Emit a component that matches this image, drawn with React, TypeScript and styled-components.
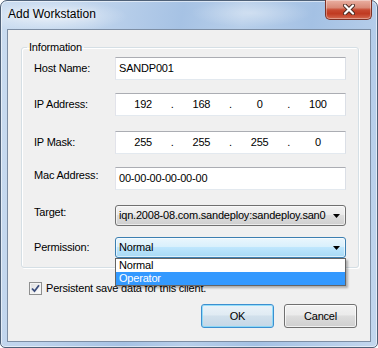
import React from 'react';
import styled, { createGlobalStyle } from 'styled-components';

const Global = createGlobalStyle`
  html, body { margin: 0; padding: 0; background: #ffffff; }
  body {
    width: 378px; height: 348px; overflow: hidden;
    font-family: "Liberation Sans", Arial, sans-serif;
  }
  * { box-sizing: border-box; }
`;

const Window = styled.div`
  width: 378px;
  height: 348px;
  border: 1px solid #4f6178;
  border-radius: 7px 7px 5px 5px;
  padding: 0 6px 5px 6px;
  display: flex;
  flex-direction: column;
  background:
    radial-gradient(ellipse 75px 16px at 52px 15px, rgba(255,255,255,0.6), rgba(255,255,255,0) 100%),
    radial-gradient(ellipse 60px 14px at 250px 12px, rgba(255,255,255,0.35), rgba(255,255,255,0) 100%),
    linear-gradient(100deg, #cadcf0 0%, #bed3ec 22%, #a6c2e4 42%, #b8cfea 56%, #a4c1e4 72%, #c3d7ee 100%);
  box-shadow: inset 0 0 0 1px rgba(255,255,255,0.55);
`;

const TitleBar = styled.div`
  height: 28px;
  flex: none;
  display: flex;
  align-items: flex-start;
`;

const Title = styled.div`
  padding: 6px 0 0 1px;
  font-size: 12px;
  line-height: 15px;
  color: #000;
  text-shadow: 0 0 6px rgba(255,255,255,0.9);
`;

const CloseButton = styled.div`
  margin: -1px -1px 0 auto;
  width: 47px;
  height: 20px;
  border: 1px solid #7e3226;
  border-top: none;
  border-radius: 0 0 5px 5px;
  background: linear-gradient(#eab0a2 0%, #d98a77 40%, #c84a31 52%, #c03a21 72%, #d4694f 100%);
  box-shadow: inset 0 0 0 1px rgba(255,255,255,0.35);
  display: flex;
  align-items: center;
  justify-content: center;
`;

const Client = styled.div`
  flex: 1;
  border: 1px solid #7d8ea4;
  background: #f0f0f0;
  padding: 0 11px 0 13px;
  display: flex;
  flex-direction: column;
  font-size: 11px;
  letter-spacing: -0.2px;
  color: #000;
`;

const GroupBox = styled.fieldset`
  margin: 11px 0 0 0;
  padding: 3px 12px 9px 12px;
  border: 1px solid #d5dfe5;
  border-radius: 3px;
  box-shadow: 1px 1px 0 #ffffff, inset 1px 1px 0 #ffffff;
  min-width: 0;
`;

const Legend = styled.legend`
  padding: 0 2px;
  margin-left: -7px;
  font-size: 11px;
  line-height: 13px;
`;

const Row = styled.div<{ $gap: number }>`
  display: flex;
  align-items: center;
  margin-top: ${p => p.$gap}px;
`;

const Label = styled.div<{ $lift?: boolean }>`
  width: 81px;
  flex: none;
  line-height: 13px;
  margin-bottom: ${p => (p.$lift ? 6 : 0)}px;
`;

const TextBox = styled.div`
  flex: 1;
  height: 23px;
  background: #fff;
  border: 1px solid;
  border-color: #abadb3 #dbdfe6 #e3e9ef #e2e3ea;
  padding: 0 3px;
  display: flex;
  align-items: center;
  line-height: 13px;
`;

const IpBox = styled(TextBox)`
  padding: 0;
  display: grid;
  grid-template-columns: 1fr 4px 1fr 4px 1fr 4px 1fr;
`;

const Octet = styled.span`
  text-align: center;
`;

const Dot = styled.span`
  text-align: center;
`;

const ComboWrap = styled.div`
  flex: 1;
  position: relative;
`;

const Combo = styled.div<{ $focused?: boolean }>`
  height: 21px;
  border: 1px solid ${p => (p.$focused ? '#3c7fb1' : '#707070')};
  border-radius: 3px;
  background: ${p =>
    p.$focused
      ? 'linear-gradient(#eaf6fd 0%, #d9f0fc 45%, #bee6fd 50%, #a7d9f5 100%)'
      : 'linear-gradient(#f2f2f2 0%, #ebebeb 45%, #dddddd 50%, #cfcfcf 100%)'};
  box-shadow: inset 0 0 0 1px rgba(255,255,255,0.6);
  display: flex;
  align-items: center;
  padding: 0 5px 0 3px;
  line-height: 13px;
  white-space: nowrap;
`;

const ComboText = styled.span`
  flex: 1;
  overflow: hidden;
`;

const DropList = styled.div`
  position: absolute;
  top: 100%;
  left: 0;
  right: 0;
  z-index: 5;
  background: #fff;
  border: 1px solid #646464;
  box-shadow: 2px 2px 2px rgba(0,0,0,0.28);
`;

const DropItem = styled.div<{ $selected?: boolean }>`
  height: 13px;
  line-height: 13px;
  padding-left: 3px;
  background: ${p => (p.$selected ? '#3399ff' : '#fff')};
  color: ${p => (p.$selected ? '#fff' : '#000')};
`;

const CheckRow = styled.div`
  display: flex;
  align-items: center;
  margin: 14px 0 0 8px;
  gap: 4px;
  line-height: 13px;
`;

const CheckBox = styled.span`
  width: 13px;
  height: 13px;
  flex: none;
  border: 1px solid #8e8f8f;
  background: linear-gradient(135deg, #dcdcdc 0%, #f6f6f6 70%, #ffffff 100%);
  box-shadow: inset 0 0 0 1px #f4f4f4;
  display: flex;
  align-items: center;
  justify-content: center;
`;

const ButtonRow = styled.div`
  display: flex;
  justify-content: flex-end;
  gap: 10px;
  margin: 9px 2px 0 0;
`;

const Button = styled.div<{ $default?: boolean }>`
  width: 73px;
  height: 24px;
  border: 1px solid ${p => (p.$default ? '#3c8fd0' : '#707070')};
  border-radius: 3px;
  background: ${p =>
    p.$default
      ? 'linear-gradient(#eaf2f8 0%, #e0ebf3 45%, #d1e0ec 50%, #c5d7e6 100%)'
      : 'linear-gradient(#f2f2f2 0%, #ebebeb 45%, #dddddd 50%, #cfcfcf 100%)'};
  box-shadow: inset 0 0 0 1px ${p => (p.$default ? 'rgba(120,215,250,0.75)' : 'rgba(255,255,255,0.7)')};
  display: flex;
  align-items: center;
  justify-content: center;
  line-height: 13px;
`;

const Arrow = () => (
  <svg width="7" height="4" viewBox="0 0 7 4">
    <path d="M0 0 H7 L3.5 4 Z" fill="#000" />
  </svg>
);

export default function App() {
  return (
    <>
      <Global />
      <Window>
        <TitleBar>
          <Title>Add Workstation</Title>
          <CloseButton>
            <svg width="12" height="11" viewBox="0 0 12 11">
              <path d="M2 1.5 L10 9.5 M10 1.5 L2 9.5" stroke="#4a2a22" strokeWidth="4" strokeLinecap="round" />
              <path d="M2 1.5 L10 9.5 M10 1.5 L2 9.5" stroke="#ffffff" strokeWidth="2.2" strokeLinecap="round" />
            </svg>
          </CloseButton>
        </TitleBar>
        <Client>
          <GroupBox>
            <Legend>Information</Legend>
            <Row $gap={0}>
              <Label>Host Name:</Label>
              <TextBox>SANDP001</TextBox>
            </Row>
            <Row $gap={13}>
              <Label>IP Address:</Label>
              <IpBox>
                <Octet>192</Octet><Dot>.</Dot>
                <Octet>168</Octet><Dot>.</Dot>
                <Octet>0</Octet><Dot>.</Dot>
                <Octet>100</Octet>
              </IpBox>
            </Row>
            <Row $gap={15}>
              <Label>IP Mask:</Label>
              <IpBox>
                <Octet>255</Octet><Dot>.</Dot>
                <Octet>255</Octet><Dot>.</Dot>
                <Octet>255</Octet><Dot>.</Dot>
                <Octet>0</Octet>
              </IpBox>
            </Row>
            <Row $gap={13}>
              <Label $lift>Mac Address:</Label>
              <TextBox>00-00-00-00-00-00</TextBox>
            </Row>
            <Row $gap={15}>
              <Label $lift>Target:</Label>
              <ComboWrap>
                <Combo>
                  <ComboText>iqn.2008-08.com.sandeploy:sandeploy.san0</ComboText>
                  <Arrow />
                </Combo>
              </ComboWrap>
            </Row>
            <Row $gap={11}>
              <Label>Permission:</Label>
              <ComboWrap>
                <Combo $focused>
                  <ComboText>Normal</ComboText>
                  <Arrow />
                </Combo>
                <DropList>
                  <DropItem>Normal</DropItem>
                  <DropItem $selected>Operator</DropItem>
                </DropList>
              </ComboWrap>
            </Row>
          </GroupBox>
          <CheckRow>
            <CheckBox>
              <svg width="9" height="9" viewBox="0 0 9 9">
                <path d="M1 4.5 L3.5 7.2 L8 1.2" stroke="#3b4d7c" strokeWidth="1.8" fill="none" />
              </svg>
            </CheckBox>
            <span>Persistent save data for this client.</span>
          </CheckRow>
          <ButtonRow>
            <Button $default>OK</Button>
            <Button>Cancel</Button>
          </ButtonRow>
        </Client>
      </Window>
    </>
  );
}
